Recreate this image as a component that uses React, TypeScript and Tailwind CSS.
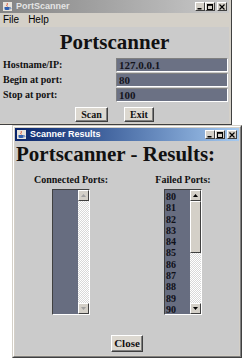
import type { ReactNode } from "react";

const FAILED = ["80", "81", "82", "83", "84", "85", "86", "87", "88", "89", "90"];

function JavaIcon() {
  return (
    <svg width="9" height="9" viewBox="0 0 9 9" className="shrink-0">
      <rect x="0" y="0" width="9" height="9" fill="#e8e4dc" />
      <path d="M4 1 Q5 2 4 3 Q3 4 4.5 4.5" stroke="#d04020" strokeWidth="0.8" fill="none" />
      <path d="M1.5 5 H6.5 V7 Q6.5 8 5 8 H3 Q1.5 8 1.5 7 Z" fill="#3060b0" />
      <path d="M6.5 5.5 Q8 5.5 8 6.3 Q8 7 6.5 7" stroke="#3060b0" strokeWidth="0.7" fill="none" />
    </svg>
  );
}

function CapBtn({ children }: { children: ReactNode }) {
  return (
    <div className="w-[10px] h-[9px] flex items-center justify-center bg-[#d4d0c8] border border-t-white border-l-white border-r-[#404040] border-b-[#404040]">
      {children}
    </div>
  );
}

function TitleButtons() {
  return (
    <div className="ml-auto flex items-center">
      <CapBtn>
        <svg width="6" height="6" viewBox="0 0 6 6">
          <rect x="0.5" y="4" width="4" height="1.5" fill="#000" />
        </svg>
      </CapBtn>
      <CapBtn>
        <svg width="6" height="6" viewBox="0 0 6 6">
          <rect x="0.5" y="0.5" width="5" height="5" fill="none" stroke="#000" strokeWidth="1" />
          <rect x="0.5" y="0.5" width="5" height="1.3" fill="#000" />
        </svg>
      </CapBtn>
      <div className="w-[2px]" />
      <CapBtn>
        <svg width="6" height="6" viewBox="0 0 6 6">
          <path d="M0.5 0.5 L5.5 5.5 M5.5 0.5 L0.5 5.5" stroke="#000" strokeWidth="1.2" />
        </svg>
      </CapBtn>
    </div>
  );
}

function Field({ label, value }: { label: string; value: string }) {
  return (
    <div className="flex h-[14px] items-center">
      <div className="w-[116px] pl-[3px] text-[10px] font-bold leading-none text-[#111]">{label}</div>
      <div className="flex-1 mr-[1px] h-full flex items-center pl-[2px] bg-[#6b7184] border border-t-[#808080] border-l-[#808080] border-r-white border-b-white text-[11px] font-bold leading-none text-[#14141c]">
        {value}
      </div>
    </div>
  );
}

function Btn({ children, className }: { children: ReactNode; className?: string }) {
  return (
    <div
      className={`flex items-center justify-center bg-[#dcd8d0] border border-t-white border-l-white border-r-[#404040] border-b-[#404040] shadow-[inset_-1px_-1px_0_#808080] text-[10px] font-bold leading-none text-[#111] ${className ?? ""}`}
    >
      {children}
    </div>
  );
}

function Arrow({ up, disabled }: { up?: boolean; disabled?: boolean }) {
  return (
    <div className="h-[11px] w-full flex items-center justify-center bg-[#d4d0c8] border border-t-white border-l-white border-r-[#404040] border-b-[#404040]">
      <svg width="5" height="3" viewBox="0 0 5 3">
        <path d={up ? "M0 3 L2.5 0 L5 3 Z" : "M0 0 L2.5 3 L5 0 Z"} fill={disabled ? "#a0a0a0" : "#000"} />
      </svg>
    </div>
  );
}

function ListBox({ items }: { items: string[] }) {
  const enabled = items.length > 0;
  return (
    <div className="w-[38px] h-[126px] flex border border-t-[#404040] border-l-[#404040] border-r-white border-b-white">
      <div className="flex-1 bg-[#676d80] pt-[1px] pl-[1px] overflow-hidden">
        {items.map((it) => (
          <div key={it} className="h-[11.3px] text-[10px] font-bold leading-[11.3px] text-[#101018]">
            {it}
          </div>
        ))}
      </div>
      <div className="w-[11px] flex flex-col bg-[repeating-conic-gradient(#d8d8d8_0_25%,#ffffff_0_50%)] bg-[length:2px_2px]">
        <Arrow up disabled={!enabled} />
        {enabled ? (
          <div className="h-[52px] w-full bg-[#d4d0c8] border border-t-white border-l-white border-r-[#404040] border-b-[#404040]" />
        ) : null}
        <div className="flex-1" />
        <Arrow disabled={!enabled} />
      </div>
    </div>
  );
}

function MainWindow() {
  return (
    <div className="absolute left-0 top-0 w-[232px] h-[125px] flex flex-col bg-[#d4d0c8] border-r border-b border-[#404040] pr-[2px] pb-[1px]">
      <div className="h-[13px] shrink-0 flex items-center pl-[3px] pr-[2px] bg-linear-to-r from-[#848484] to-[#cacaca]">
        <JavaIcon />
        <span className="ml-[4px] text-[9px] font-bold leading-none text-[#e4e4e4] font-['Liberation_Sans',sans-serif]">
          PortScanner
        </span>
        <TitleButtons />
      </div>
      <div className="h-[14px] shrink-0 flex items-center gap-[9px] pl-[3px] text-[10px] leading-none text-black font-['Liberation_Sans',sans-serif]">
        <span>File</span>
        <span>Help</span>
      </div>
      <div className="flex-1 flex flex-col bg-[#cbcbcb] font-['Liberation_Serif',serif] overflow-hidden">
        <div className="h-[31px] shrink-0 flex items-center justify-center text-[21px] font-bold leading-none text-[#111]">
          Portscanner
        </div>
        <div className="flex flex-col gap-[1px]">
          <Field label="Hostname/IP:" value="127.0.0.1" />
          <Field label="Begin at port:" value="80" />
          <Field label="Stop at port:" value="100" />
        </div>
        <div className="mt-[5px] flex justify-center gap-[16px]">
          <Btn className="w-[33px] h-[15px]">Scan</Btn>
          <Btn className="w-[30px] h-[15px]">Exit</Btn>
        </div>
      </div>
    </div>
  );
}

function ResultsWindow() {
  return (
    <div className="absolute left-[12px] top-[125px] w-[230px] h-[233px] flex flex-col bg-[#d4d0c8] border border-t-[#d4d0c8] border-l-[#d4d0c8] border-r-[#404040] border-b-[#404040]">
      <div className="flex-1 flex flex-col border border-t-white border-l-white border-r-[#808080] border-b-[#808080] p-[1px]">
        <div className="h-[13px] shrink-0 flex items-center pl-[2px] pr-[2px] bg-linear-to-r from-[#0a246a] to-[#a6caf0]">
          <JavaIcon />
          <span className="ml-[4px] text-[9px] font-bold leading-none text-white font-['Liberation_Sans',sans-serif]">
            Scanner Results
          </span>
          <TitleButtons />
        </div>
        <div className="flex-1 flex flex-col bg-[#cbcbcb] font-['Liberation_Serif',serif]">
          <div className="h-[27px] shrink-0 flex items-center pl-[1px] text-[21px] font-bold leading-none text-[#111]">
            Portscanner - Results:
          </div>
          <div className="mt-[6px] grid grid-cols-2 text-[10px] font-bold leading-[12px] text-[#111]">
            <div className="text-center">Connected Ports:</div>
            <div className="text-center">Failed Ports:</div>
          </div>
          <div className="mt-[3px] grid grid-cols-2">
            <div className="flex justify-center">
              <ListBox items={[]} />
            </div>
            <div className="flex justify-center">
              <ListBox items={FAILED} />
            </div>
          </div>
          <div className="mt-[20px] flex justify-center">
            <Btn className="w-[32px] h-[17px] text-[11px]">Close</Btn>
          </div>
        </div>
      </div>
    </div>
  );
}

export default function App() {
  return (
    <div className="relative w-[242px] h-[358px] overflow-hidden bg-white">
      <MainWindow />
      <ResultsWindow />
    </div>
  );
}
